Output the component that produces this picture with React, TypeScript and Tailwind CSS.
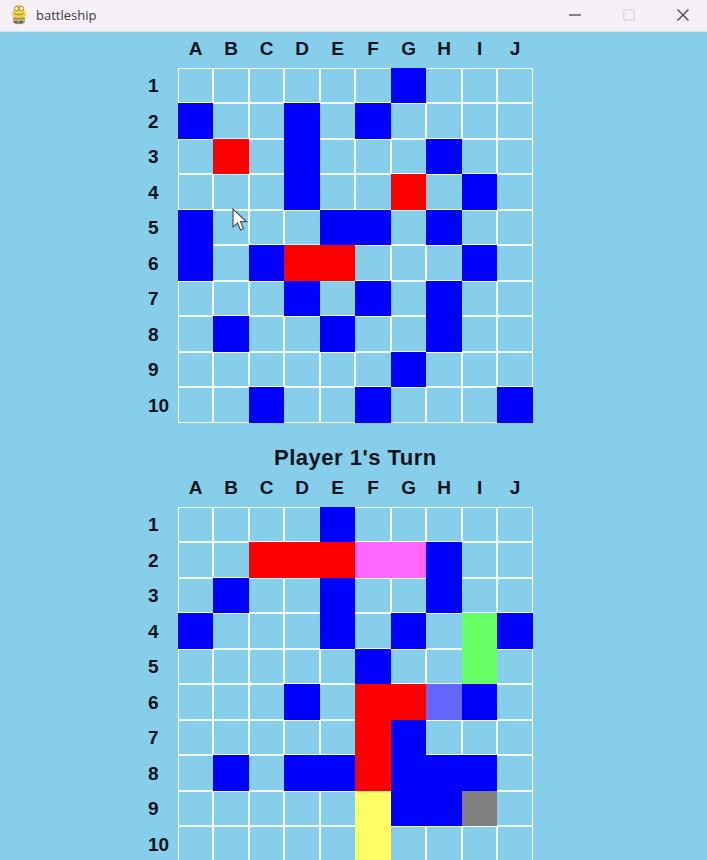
const COLS = ['A', 'B', 'C', 'D', 'E', 'F', 'G', 'H', 'I', 'J']

const COLORS: Record<string, string> = {
  b: 'bg-[#0000ff]',
  r: 'bg-[#ff0000]',
  p: 'bg-[#ff66ff]',
  g: 'bg-[#66ff66]',
  v: 'bg-[#6666ff]',
  y: 'bg-[#ffff66]',
  x: 'bg-[#808080]',
}

const TOP_BOARD = [
  '......b...',
  'b..b.b....',
  '.r.b...b..',
  '...b..r.b.',
  'b...bb.b..',
  'b.brr...b.',
  '...b.b.b..',
  '.b..b..b..',
  '......b...',
  '..b..b...b',
]

const BOTTOM_BOARD = [
  '....b.....',
  '..rrrppb..',
  '.b..b..b..',
  'b...b.b.gb',
  '.....b..g.',
  '...b.rrvb.',
  '.....rb...',
  '.b.bbrbbb.',
  '.....ybbx.',
  '.....y....',
]

function cellClass(row: string, i: number) {
  const c = row[i]
  if (c !== '.') return COLORS[c]
  // vertical lines are hidden next to a filled cell, horizontal ones stay
  const left = i === 0 || row[i - 1] === '.' ? 'border-l' : ''
  const right = i === 9 || row[i + 1] === '.' ? 'border-r' : ''
  return `border-y border-[#f2fbff] ${left} ${right}`
}

function Board({ rows }: { rows: string[] }) {
  return (
    <div className="flex">
      <div className="flex w-[30px] flex-col">
        {rows.map((_, i) => (
          <div key={i} className="flex h-[35.5px] items-center pt-0.5 text-[19px] font-bold text-[#0b1420]">
            {i + 1}
          </div>
        ))}
      </div>
      <div className="grid w-[355px] grid-cols-10">
        {rows.flatMap((row, r) =>
          row.split('').map((_, i) => <div key={`${r}-${i}`} className={`h-[35.5px] ${cellClass(row, i)}`} />),
        )}
      </div>
    </div>
  )
}

function ColumnLabels() {
  return (
    <div className="ml-[30px] grid w-[355px] grid-cols-10">
      {COLS.map((c) => (
        <div key={c} className="text-center text-[19px] font-bold leading-[22px] text-[#0b1420]">
          {c}
        </div>
      ))}
    </div>
  )
}

function TitleBar() {
  return (
    <div className="flex h-8 items-center border-b border-[#cfe3ee] bg-[#f5f0f7]">
      <svg className="mb-[3px] ml-[10px]" width="18" height="22" viewBox="0 0 18 22">
        <path d="M2 12c0-3 1-5 3-6 0-3 2-5 4-4 2-1 4 1 4 4 2 1 3 3 3 6 0 2-2 3-4 3H6c-2 0-4-1-4-3z" fill="#eed348" />
        <circle cx="6.5" cy="5.5" r="2.2" fill="#fbf3b0" stroke="#7a6a24" strokeWidth="0.7" />
        <circle cx="11.5" cy="5.5" r="2.2" fill="#fbf3b0" stroke="#7a6a24" strokeWidth="0.7" />
        <path d="M4.5 10c2 2.5 7 2.5 9 0" stroke="#9c8420" strokeWidth="1.1" fill="none" />
        <path d="M3 15c2-1.5 4 .5 6 0s4-1 6 0v4c-2 3-10 3-12 0z" fill="#8d8974" />
        <path d="M6 16v4M11 16v4" stroke="#4d4a3c" strokeWidth="1.2" />
        <path d="M3 17h12" stroke="#e6cc4c" strokeWidth="1.4" />
      </svg>
      <span className="ml-2 font-['Open_Sans',sans-serif] text-[13px] text-[#3a3a40]">battleship</span>
      <div className="mb-0.5 ml-auto flex items-center">
        <svg width="12" height="12" viewBox="0 0 12 12" className="mr-[42px]">
          <path d="M0 6h12" stroke="#55505a" strokeWidth="1.4" />
        </svg>
        <svg width="12" height="12" viewBox="0 0 12 12" className="mr-[42px]">
          <rect x="0.7" y="0.7" width="10.6" height="10.6" rx="1.5" fill="none" stroke="#dcd8de" strokeWidth="1.4" />
        </svg>
        <svg width="12" height="12" viewBox="0 0 12 12" className="mr-[18px]">
          <path d="M0.5 0.5l11 11M11.5 0.5l-11 11" stroke="#4a454f" strokeWidth="1.4" />
        </svg>
      </div>
    </div>
  )
}

export default function App() {
  return (
    <div className="relative h-[860px] w-[707px] overflow-hidden bg-[#87ceeb] font-['Liberation_Sans',sans-serif]">
      <TitleBar />
      <div className="pl-[147.9px]">
        <div className="flex h-[35.9px] items-center pb-[2px]">
          <ColumnLabels />
        </div>
        <Board rows={TOP_BOARD} />
        <div className="ml-[30px] mt-[23px] w-[355px] text-center text-[22px] font-bold leading-6 tracking-[0.5px] text-[#0b1420]">
          Player 1's Turn
        </div>
        <div className="mb-2 mt-[7px]">
          <ColumnLabels />
        </div>
        <Board rows={BOTTOM_BOARD} />
      </div>
      {/* mouse cursor over the top board */}
      <svg className="absolute left-[232px] top-[208px] z-20" width="16" height="25" viewBox="0 0 16 25">
        <path d="M1 1v18l4.5-4 3 7 3-1.3-3-7h6z" fill="#ffffff" stroke="#4a5560" strokeWidth="1.2" />
      </svg>
    </div>
  )
}
